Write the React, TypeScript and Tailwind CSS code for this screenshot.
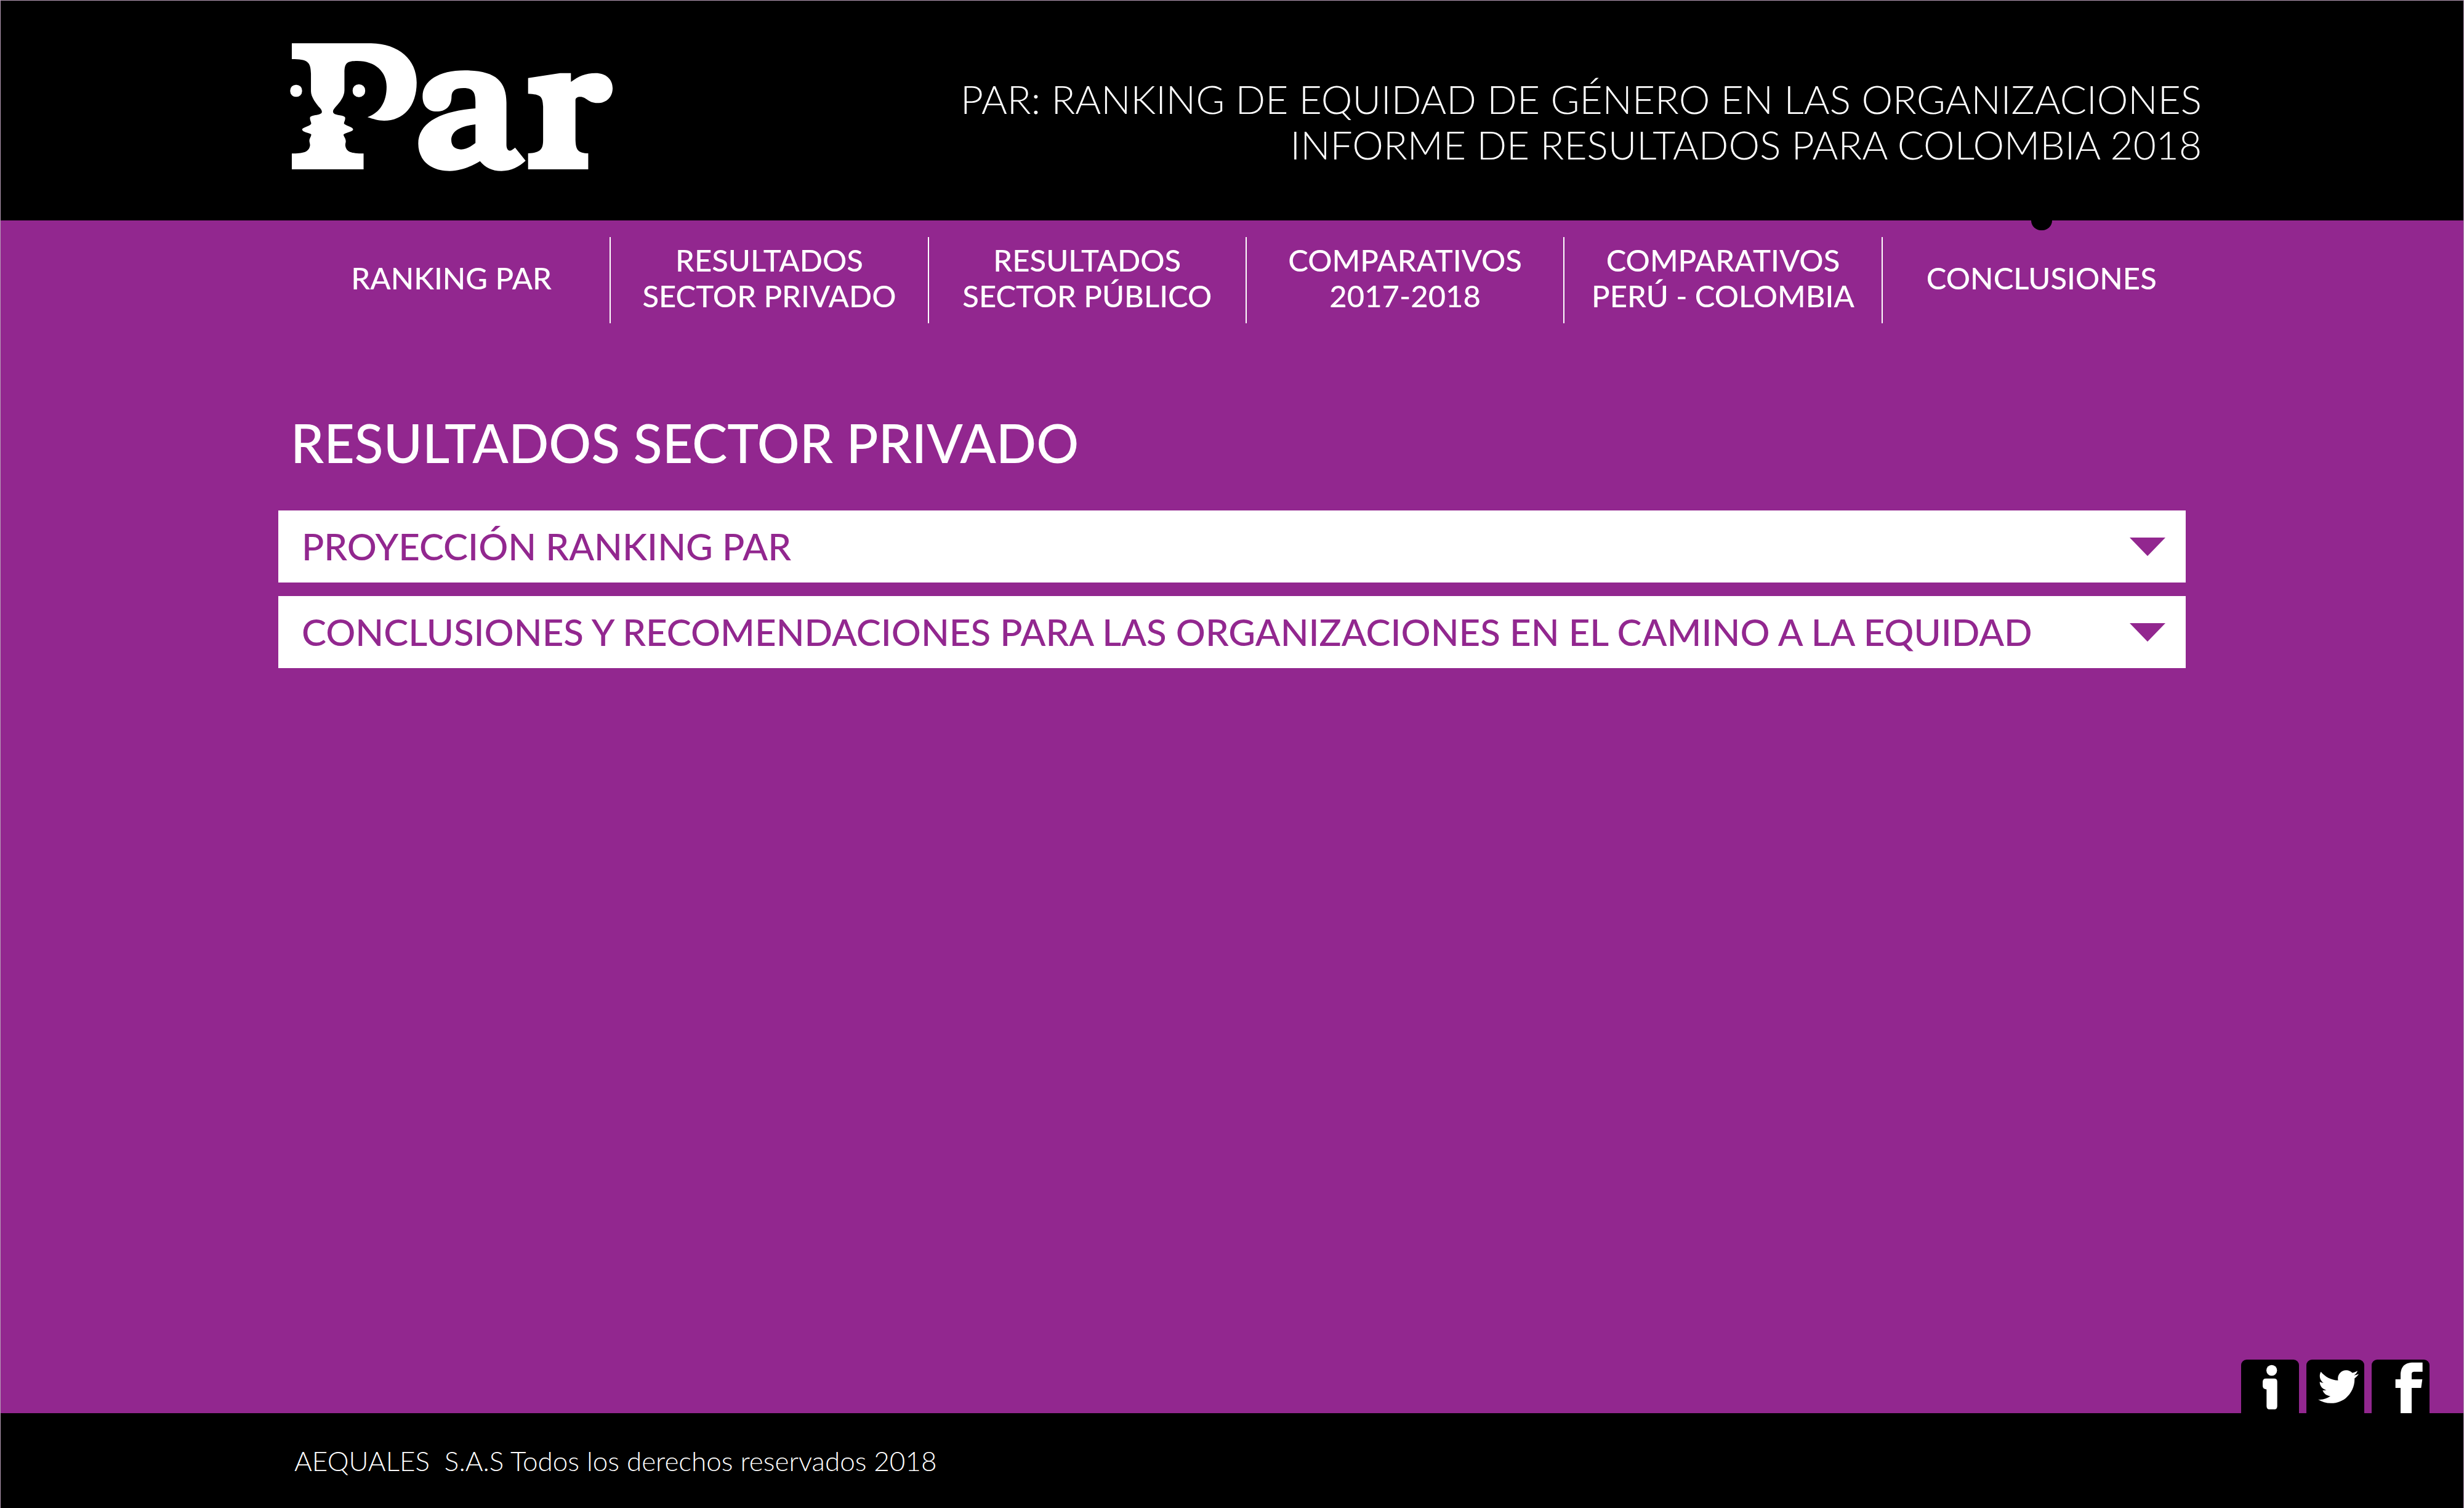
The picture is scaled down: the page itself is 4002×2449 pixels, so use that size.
import { useState } from 'react';
import { FaTwitter } from 'react-icons/fa';

const NAV: { lines: string[]; active?: boolean }[] = [
  { lines: ['RANKING PAR'] },
  { lines: ['RESULTADOS', 'SECTOR PRIVADO'] },
  { lines: ['RESULTADOS', 'SECTOR PÚBLICO'] },
  { lines: ['COMPARATIVOS', '2017-2018'] },
  { lines: ['COMPARATIVOS', 'PERÚ - COLOMBIA'] },
  { lines: ['CONCLUSIONES'], active: true },
];

const SECTIONS = [
  'PROYECCIÓN RANKING PAR',
  'CONCLUSIONES Y RECOMENDACIONES PARA LAS ORGANIZACIONES EN EL CAMINO A LA EQUIDAD',
];

function Logo() {
  return (
    <svg
      role="img"
      aria-label="Par"
      viewBox="84 90 1416 624"
      preserveAspectRatio="none"
      className="h-[208px] w-[524px] shrink-0 fill-white"
    >
      <path d="M92 91H440C562 93 640 172 640 282C640 400 580 468 497 468C470 468 450 460 424 451C480 428 508 375 508 302C508 230 458 177 380 177C335 177 323 185 323 235V320C323 350 303 378 285 400C272 416 270 425 276 432C285 443 322 440 326 452C328 470 318 475 322 484C335 495 361 500 361 511C361 522 322 528 319 537C320 545 329 555 329 568C329 578 326 578 327 590C332 620 350 627 407 628V705H92V628C140 628 168 622 172 588C172 578 169 575 169 565C170 550 178 545 177 534C170 528 137 524 137 510C142 500 170 495 177 484C178 475 170 465 172 452C176 440 215 443 223 430C226 422 222 412 210 400C195 380 176 350 176 325V240C175 180 160 168 92 168Z" />
      <rect x="85" y="293" width="52" height="59" rx="25" ry="27" />
      <rect x="359" y="291" width="55" height="62" rx="26" ry="29" />
      <path
        fillRule="evenodd"
        d="M898 408V378C898 325 885 309 845 309C810 309 794 322 793 350C793 400 765 423 728 423C690 423 666 395 666 350C666 275 735 223 852 223C985 223 1034 275 1034 380V585C1034 603 1040 614 1049 614C1057 613 1064 606 1072 599L1118 663C1090 692 1055 713 1012 713C970 713 940 695 918 665C880 690 835 713 785 713C700 713 647 660 647 580C647 480 740 422 898 408ZM898 486C830 494 792 520 792 562C792 592 808 608 835 608C860 608 880 592 898 577Z"
      />
      <path d="M1129 260L1270 236H1317V279C1350 252 1380 236 1425 236C1470 236 1500 265 1500 310C1500 350 1475 382 1433 382C1392 382 1385 352 1358 352C1345 352 1337 358 1337 368V560C1338 610 1348 626 1393 627V705H1129V627C1185 624 1195 605 1195 560V400C1193 350 1185 340 1129 337Z" />
    </svg>
  );
}

function InfoIcon() {
  return (
    <svg aria-hidden="true" viewBox="123 88 282 260" className="h-full w-full fill-white">
      <circle cx="272" cy="140" r="26" />
      <path d="M244 180H284Q299 180 299 195V315Q299 330 284 330H262Q247 330 247 315V233Q228 231 228 215V197Q228 180 244 180Z" />
    </svg>
  );
}

function FacebookIcon() {
  return (
    <svg aria-hidden="true" viewBox="756 87 282 261" className="h-full w-full fill-white">
      <path d="M897 348V225H872V183H897V160C899 122 915 101 960 101H1004V146H966C954 146 951 149 951 160V183H1003L997 225H951V348Z" />
    </svg>
  );
}

function Accordion({ title }: { title: string }) {
  const [open, setOpen] = useState(false);
  return (
    <button
      type="button"
      aria-expanded={open}
      onClick={() => setOpen(!open)}
      className="flex w-full items-center justify-between bg-white pl-[38px] pr-[33px] text-left text-[60px] leading-[117px] font-medium text-[#92278f]"
    >
      {title}
      <svg aria-hidden="true" viewBox="0 0 58 30" className="h-[30px] w-[58px] shrink-0 fill-[#92278f]">
        <path d="M0 0H58L29 30Z" />
      </svg>
    </button>
  );
}

const TAB = 'flex h-[87px] w-[94px] items-center justify-center rounded-t-[9px] bg-black text-white';

export default function App() {
  return (
    <div className="flex min-h-screen flex-col border-x border-t border-[#b79cb7] bg-[#92278f] font-['Lato',sans-serif] text-white">
      <header className="flex items-start justify-between bg-black pt-[69px] pr-[425px] pb-[80px] pl-[470px]">
        <Logo />
        <p className="pt-[54px] text-right text-[64px] leading-[74px] font-light">
          PAR: RANKING DE EQUIDAD DE GÉNERO EN LAS ORGANIZACIONES
          <br />
          INFORME DE RESULTADOS PARA COLOMBIA 2018
        </p>
      </header>

      <nav className="grid grid-cols-6 pr-[427px] pl-[475px] text-center text-[49px] leading-[58px] font-medium">
        {NAV.map(({ lines, active }, i) => (
          <div key={i} className="relative pt-[27px]">
            {active && (
              <span className="absolute top-0 left-1/2 h-[16px] w-[34px] -translate-x-1/2 rounded-b-full bg-black" />
            )}
            <a
              href="#"
              className={
                i < NAV.length - 1
                  ? 'flex h-[140px] flex-col justify-center border-r-2 border-white pb-[8px]'
                  : 'flex h-[140px] flex-col justify-center pb-[8px]'
              }
            >
              {lines.map((line) => (
                <span key={line}>{line}</span>
              ))}
            </a>
          </div>
        ))}
      </nav>

      <main className="px-[451px] pt-[139px]">
        <h1 className="pl-[20px] text-[86px] leading-[110px] font-medium">RESULTADOS SECTOR PRIVADO</h1>
        <div className="mt-[55px] flex flex-col gap-[22px]">
          {SECTIONS.map((title) => (
            <Accordion key={title} title={title} />
          ))}
        </div>
      </main>

      <div className="mt-auto flex justify-end gap-[12px] pr-[55px]">
        <a href="#" aria-label="Información" className={TAB}>
          <InfoIcon />
        </a>
        <a href="#" aria-label="Twitter" className={TAB}>
          <FaTwitter aria-hidden="true" className="ml-[10px] h-[66px] w-[66px]" />
        </a>
        <a href="#" aria-label="Facebook" className={TAB}>
          <FacebookIcon />
        </a>
      </div>

      <footer className="bg-black pl-[477px]">
        <p className="text-[44px] leading-[154px] font-light whitespace-pre">
          {'AEQUALES  S.A.S Todos los derechos reservados 2018'}
        </p>
      </footer>
    </div>
  );
}
